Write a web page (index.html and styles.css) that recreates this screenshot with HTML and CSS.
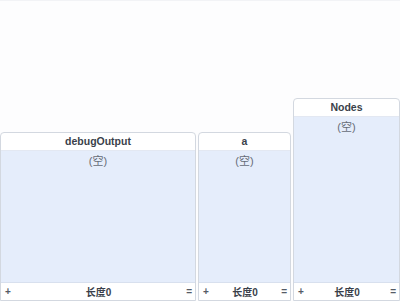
FILE: index.html
```html
<!DOCTYPE html>
<html>
<head>
<meta charset="utf-8">
<link rel="stylesheet" href="styles.css">
</head>
<body>
<div class="row">
  <div class="panel w1">
    <div class="head">debugOutput</div>
    <div class="body short">(空)</div>
    <div class="foot"><span class="btn">+</span><span class="len">长度0</span><span class="btn r">=</span></div>
  </div>
  <div class="panel w2">
    <div class="head">a</div>
    <div class="body short">(空)</div>
    <div class="foot"><span class="btn">+</span><span class="len">长度0</span><span class="btn r">=</span></div>
  </div>
  <div class="panel w3">
    <div class="head">Nodes</div>
    <div class="body tall">(空)</div>
    <div class="foot"><span class="btn">+</span><span class="len">长度0</span><span class="btn r">=</span></div>
  </div>
</div>
</body>
</html>
```
FILE: styles.css
```css
html, body {
  margin: 0;
  padding: 0;
  background: #fdfdfe;
  width: 400px;
  height: 301px;
  overflow: hidden;
  font-family: "Liberation Sans", "Noto Sans CJK SC", sans-serif;
}
.row {
  display: flex;
  align-items: flex-end;
  gap: 2px;
  height: 301px;
  border-top: 1px solid #f2f3f6;
  box-sizing: border-box;
}
.panel {
  display: flex;
  flex-direction: column;
  border: 1px solid #d3d8e0;
  border-radius: 4px 4px 0 0;
  background: #fff;
  box-sizing: border-box;
}
.w1 { width: 196px; }
.w2 { width: 93px; }
.w3 { width: 107px; }
.head {
  height: 17px;
  line-height: 17px;
  text-align: center;
  font-size: 10.5px;
  font-weight: bold;
  color: #3a3f4a;
  border-bottom: 1px solid #e3e8f2;
}
.body {
  background: #e5edfb;
  text-align: center;
  font-size: 11px;
  line-height: 13px;
  color: #666c78;
  padding-top: 4px;
  box-sizing: border-box;
}
.short { height: 131px; }
.tall { height: 165px; }
.foot {
  height: 17px;
  display: flex;
  align-items: center;
  padding: 0 3px 0 4px;
  border-top: 1px solid #d8e0ee;
  font-size: 10px;
  font-weight: bold;
  color: #3a3f4a;
}
.btn { width: 8px; color: #555b66; }
.r { text-align: right; }
.len { flex: 1; text-align: center; }
```
